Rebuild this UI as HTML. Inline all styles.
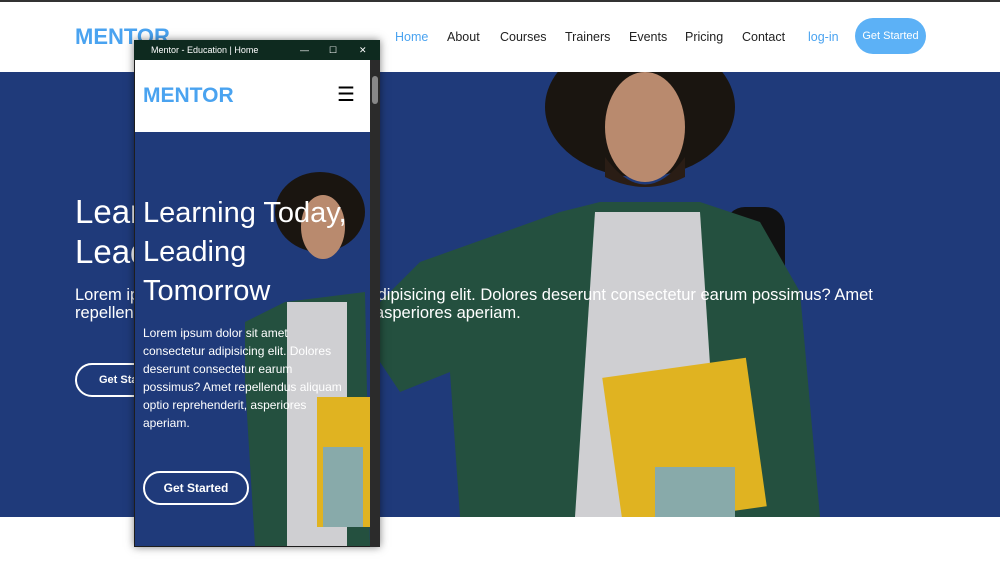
<!DOCTYPE html>
<html><head><meta charset="utf-8"><style>
*{margin:0;padding:0;box-sizing:border-box}
body{width:1000px;height:571px;position:relative;overflow:hidden;background:#fff;font-family:"Liberation Sans",sans-serif}
.top{position:absolute;left:0;top:0;width:1000px;height:2px;background:#333}
.logo{position:absolute;left:75px;top:24px;color:#4aa3f0;font-weight:bold;font-size:22px}
.nav{position:absolute;top:30px;font-size:12.5px;color:#222}
.btn{position:absolute;left:855px;top:18px;width:71px;height:36px;border-radius:18px;background:#5cb1f6;color:#fff;font-size:11px;line-height:36px;text-align:center}
.hero{position:absolute;left:0;top:72px;width:1000px;height:445px;background:#1f3a7a;overflow:hidden}
.t{position:absolute;color:#fff;white-space:nowrap}
.win{position:absolute;left:134px;top:40px;width:246px;height:507px;background:#1e1e1e;box-shadow:0 0 8px rgba(0,0,0,.5)}
.wt{height:20px;background:#0e2a1f;color:#fff;font-size:9px;line-height:20px;padding-left:17px;position:relative}
.mh{position:absolute;left:1px;top:20px;width:235px;height:72px;background:#fff}
.mb{position:absolute;left:1px;top:92px;width:235px;height:414px;background:#1f3a7a;overflow:hidden}
.sb{position:absolute;right:0;top:20px;width:10px;height:487px;background:#2b2b2b}
</style></head><body>
<div class="top"></div>
<div class="logo">MENTOR</div>
<div class="nav" style="left:395px;color:#4aa3f0">Home</div>
<div class="nav" style="left:447px">About</div>
<div class="nav" style="left:500px">Courses</div>
<div class="nav" style="left:565px">Trainers</div>
<div class="nav" style="left:629px">Events</div>
<div class="nav" style="left:685px">Pricing</div>
<div class="nav" style="left:742px">Contact</div>
<div class="nav" style="left:808px;color:#4aa3f0">log-in</div>
<div class="btn">Get Started</div>
<div class="hero">
<svg width="1000" height="445" style="position:absolute;left:0;top:0">
<ellipse cx="640" cy="35" rx="95" ry="70" fill="#1a1510"/>
<ellipse cx="645" cy="55" rx="40" ry="55" fill="#b98a6e"/>
<path d="M605 85 Q645 140 685 85 L685 105 Q645 125 605 105Z" fill="#2a1d15"/>
<rect x="725" y="135" width="60" height="300" rx="20" fill="#111"/>
<path d="M380 230 L420 190 L560 140 L600 130 L700 130 L760 150 L800 220 L820 445 L460 445 L450 300 L400 320 L380 290Z" fill="#24503f"/>
<path d="M595 140 L700 140 L720 445 L575 445Z" fill="#cfcfd2"/>
<rect x="612" y="295" width="145" height="150" fill="#e0b321" transform="rotate(-8 685 370)"/>
<rect x="655" y="395" width="80" height="50" fill="#8aa"/>
</svg>
<div class="t" style="left:75px;top:120px;font-size:33px;line-height:40px">Learn<br>Lead</div>
<div class="t" style="left:75px;top:214px;font-size:16.5px;line-height:18px">Lorem ipsum dolor sit amet consectetur adipisicing elit. Dolores deserunt consectetur earum possimus? Amet<br>repellendus aliquam optio reprehenderit, asperiores aperiam.</div>
<div class="t" style="left:75px;top:291px;width:120px;height:34px;border:2px solid #fff;border-radius:17px;font-size:11px;font-weight:bold;line-height:30px;padding-left:22px">Get Started</div>
</div>
<div class="win">
<div class="wt">Mentor - Education | Home<span style="position:absolute;left:166px">—</span><span style="position:absolute;left:195px">☐</span><span style="position:absolute;left:225px">✕</span></div>
<div class="mh"><div style="position:absolute;left:8px;top:24px;color:#4aa3f0;font-weight:bold;font-size:21px">MENTOR</div><div style="position:absolute;left:202px;top:22px;font-size:20px">☰</div></div>
<div class="mb">
<svg width="235" height="414" style="position:absolute;left:0;top:0">
<ellipse cx="185" cy="80" rx="45" ry="40" fill="#1a1510"/>
<ellipse cx="188" cy="95" rx="22" ry="32" fill="#b98a6e"/>
<path d="M110 190 L150 170 L230 160 L235 414 L120 414 L110 250Z" fill="#24503f"/>
<rect x="152" y="170" width="60" height="244" fill="#cfcfd2"/>
<rect x="182" y="265" width="60" height="130" fill="#e0b321"/>
<rect x="188" y="315" width="40" height="80" fill="#8aa"/>
</svg>
<div class="t" style="left:8px;top:62px;font-size:29px;line-height:39px">Learning Today,<br>Leading<br>Tomorrow</div>
<div class="t" style="left:8px;top:192px;font-size:12px;line-height:18px">Lorem ipsum dolor sit amet<br>consectetur adipisicing elit. Dolores<br>deserunt consectetur earum<br>possimus? Amet repellendus aliquam<br>optio reprehenderit, asperiores<br>aperiam.</div>
<div class="t" style="left:8px;top:339px;width:106px;height:34px;border:2px solid #fff;border-radius:17px;font-size:12px;font-weight:bold;line-height:30px;text-align:center">Get Started</div>
</div>
<div class="sb"><div style="position:absolute;left:2px;top:16px;width:6px;height:28px;background:#888;border-radius:3px"></div></div>
</div>
</body></html>
